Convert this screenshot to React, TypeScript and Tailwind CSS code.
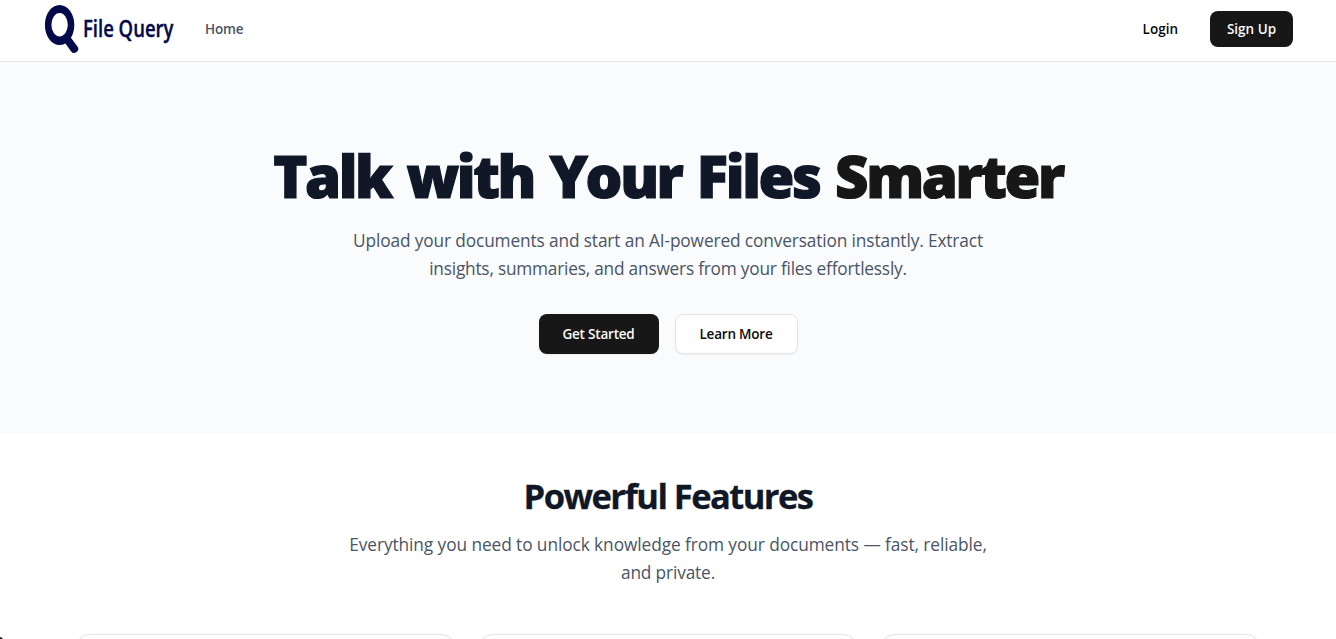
function Logo() {
  return (
    <a href="#" className="flex items-center" aria-label="File Query">
      <svg viewBox="0 0 36 50" className="h-[50px] w-9 shrink-0" fill="none">
        <path
          fill="#030b4a"
          fillRule="evenodd"
          d="M16.6 1a14.7 20 0 1 0 0 40a14.7 20 0 1 0 0-40zM16.6 9a8.2 11.7 0 1 1 0 23.4a8.2 11.7 0 1 1 0-23.4z"
        />
        <path d="M24 35 L31.2 44.8" stroke="#030b4a" strokeWidth="8" strokeLinecap="round" />
      </svg>
      <span className="-mt-[2px] ml-[3.5px] w-[90.5px] origin-left scale-x-[0.79] text-[23.4px] font-semibold leading-[50px] whitespace-nowrap text-[#030b4a] [-webkit-text-stroke:0.4px_#030b4a]">
        File Query
      </span>
    </a>
  );
}

function Header() {
  return (
    <header className="h-[62px] border-b border-gray-200 bg-white">
      <div className="flex h-[58px] items-center justify-between px-[43px]">
        <div className="flex items-center gap-8">
          <Logo />
          <a href="#" className="text-[13.5px] font-semibold tracking-[-0.15px] text-gray-600">Home</a>
        </div>
        <div className="flex items-center gap-4">
          <a href="#" className="flex h-9 items-center px-4 text-[13.5px] font-semibold text-neutral-950">Login</a>
          <a href="#" className="flex h-9 w-[83px] items-center justify-center rounded-lg bg-neutral-900 text-[13.5px] font-semibold text-neutral-50">
            Sign Up
          </a>
        </div>
      </div>
    </header>
  );
}

function Hero() {
  return (
    <section className="flex h-[371px] flex-col items-center bg-[#f9fbfd] pt-[84px] text-center">
      <h1 className="text-[58px] font-black leading-[60px] tracking-[-2.4px] [word-spacing:2.8px] whitespace-nowrap text-gray-900 [-webkit-text-stroke:1.2px_currentColor]">
        Talk with Your Files <span className="text-neutral-900">Smarter</span>
      </h1>
      <p className="mt-[21px] text-[17.3px] leading-7 text-gray-600">
        <span className="block tracking-[-0.13px] whitespace-nowrap">
          Upload your documents and start an AI-powered conversation instantly. Extract
        </span>
        <span className="block tracking-[-0.22px] whitespace-nowrap">
          insights, summaries, and answers from your files effortlessly.
        </span>
      </p>
      <div className="mt-[31px] flex gap-4">
        <a href="#" className="flex h-10 w-[120px] items-center justify-center rounded-lg bg-neutral-900 text-[13.5px] font-semibold tracking-[-0.2px] text-neutral-50 shadow-xs">
          Get Started
        </a>
        <a href="#" className="flex h-10 w-[123px] items-center justify-center rounded-lg border border-neutral-200 bg-white text-[13.5px] font-semibold tracking-[-0.2px] text-neutral-950 shadow-xs">
          Learn More
        </a>
      </div>
    </section>
  );
}

const cards = ["a", "b", "c"];

function Features() {
  return (
    <section className="flex flex-col items-center bg-white pt-[43px] text-center">
      <h2 className="text-[34.5px] font-bold leading-10 tracking-[-1.55px] whitespace-nowrap text-gray-900 [-webkit-text-stroke:0.3px_currentColor]">
        Powerful Features
      </h2>
      <p className="mt-[15px] text-[17.3px] leading-7 text-gray-600">
        <span className="block tracking-[-0.08px] whitespace-nowrap">
          Everything you need to unlock knowledge from your documents — fast, reliable,
        </span>
        <span className="block tracking-[-0.15px]">and private.</span>
      </p>
      <div className="mt-[47px] grid w-[1184px] grid-cols-3 gap-6">
        {cards.map((id) => (
          <div key={id} className="h-[180px] rounded-[14px] border border-neutral-200 bg-white shadow-sm" />
        ))}
      </div>
    </section>
  );
}

export default function App() {
  return (
    <div className="relative h-[639px] overflow-hidden bg-white font-['Open_Sans','Noto_Sans',sans-serif]">
      <Header />
      <Hero />
      <Features />
      <div className="absolute -bottom-[5px] -left-1 size-[7px] rounded-full bg-neutral-800" />
    </div>
  );
}
